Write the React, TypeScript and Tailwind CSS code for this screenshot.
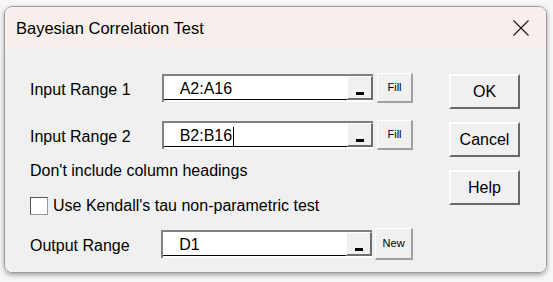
import React from "react";

const font = { fontFamily: '"Liberation Sans", Arial, sans-serif' };

function RangeField({ value, caret }: { value: string; caret?: boolean }) {
  return (
    <div className="flex h-[28px] w-[212px] border-t-2 border-l-2 border-[#808080] bg-white pb-[2px]">
      <div className="flex flex-1 items-center border-b border-black pl-[16px] pt-[3px] text-[16px] text-black">
        <span>{value}</span>
        {caret && <span className="ml-[1px] inline-block h-[19px] w-[1px] bg-black" />}
      </div>
      <div className="flex w-[26px] items-end justify-center border-t border-l border-t-white border-l-white border-r-2 border-b-2 border-r-[#6e6e6e] border-b-[#6e6e6e] bg-[#f0f0f0] pb-[3px]">
        <div className="h-[3px] w-[8px] bg-black" />
      </div>
    </div>
  );
}

function SmallButton({ label }: { label: string }) {
  return (
    <div className="ml-[4px] flex h-[30px] w-[36px] items-center justify-center border-t border-l border-t-white border-l-white border-r-2 border-b-2 border-r-[#a0a0a0] border-b-[#a0a0a0] bg-[#f0f0f0] text-[11px] text-black">
      {label}
    </div>
  );
}

function BigButton({ label }: { label: string }) {
  return (
    <div className="flex h-[35px] w-[71px] items-center justify-center border-t-2 border-l-2 border-t-white border-l-white border-r-2 border-b-2 border-r-[#696969] border-b-[#696969] bg-[#f0f0f0] text-[16px] text-black">
      {label}
    </div>
  );
}

export default function App() {
  return (
    <div className="h-[282px] w-[553px] overflow-hidden bg-[#f7f7f7]" style={font}>
      <div className="ml-[4px] mt-[6px] flex h-[267px] w-[543px] flex-col overflow-hidden rounded-[8px] border border-[#9a9a9a] shadow-[0_2px_5px_rgba(0,0,0,0.35)]">
        <div className="flex h-[42px] items-center justify-between bg-[#f8efed] pl-[11px] pr-[17px]">
          <span className="text-[16.5px] text-black">Bayesian Correlation Test</span>
          <svg width="16" height="16" viewBox="0 0 16 16" fill="none">
            <path d="M0.5 0.5 L15.5 15.5 M15.5 0.5 L0.5 15.5" stroke="#1a1a1a" strokeWidth="1.2" />
          </svg>
        </div>
        <div className="flex flex-1 bg-[#f0f0f0] pl-[25px] pt-[24px]">
          <div className="flex w-[383px] flex-col">
            <div className="flex h-[30px] items-center">
              <div className="w-[132px] pt-[3px] text-[16px] text-black">Input Range 1</div>
              <RangeField value="A2:A16" />
              <SmallButton label="Fill" />
            </div>
            <div className="mt-[17px] flex h-[30px] items-center">
              <div className="w-[132px] pt-[3px] text-[16px] text-black">Input Range 2</div>
              <RangeField value="B2:B16" caret />
              <SmallButton label="Fill" />
            </div>
            <div className="mt-[11px] h-[20px] text-[16px] leading-[20px] text-black">Don't include column headings</div>
            <div className="mt-[16px] flex h-[18px] items-center">
              <div className="h-[18px] w-[18px] border border-t-[#555] border-l-[#555] border-r-[#999] border-b-[#999] bg-white" />
              <span className="ml-[5px] text-[16px] text-black">Use Kendall's tau non-parametric test</span>
            </div>
            <div className="mt-[13px] flex h-[32px] items-center">
              <div className="w-[132px] pt-[3px] text-[16px] text-black">Output Range</div>
              <RangeField value="D1" />
              <div className="ml-[3px] flex h-[32px] w-[38px] items-center justify-center border-t border-l border-t-white border-l-white border-r-2 border-b-2 border-r-[#a0a0a0] border-b-[#a0a0a0] bg-[#f0f0f0] text-[11px] text-black">
                New
              </div>
            </div>
          </div>
          <div className="ml-[36px] flex flex-col gap-[13px] pt-[1px]">
            <BigButton label="OK" />
            <BigButton label="Cancel" />
            <BigButton label="Help" />
          </div>
        </div>
      </div>
    </div>
  );
}
